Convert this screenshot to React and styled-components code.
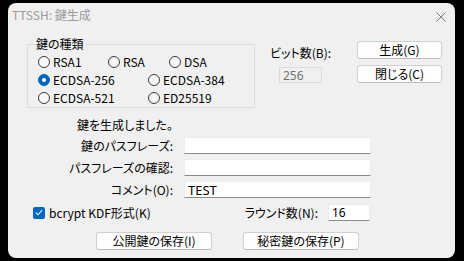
import React, { useState } from "react";
import styled, { createGlobalStyle } from "styled-components";

const GlobalStyle = createGlobalStyle`
  html, body {
    margin: 0;
    padding: 0;
    background: #000;
  }
  body {
    font-family: "Noto Sans CJK JP", "Noto Sans", sans-serif;
    font-size: 12px;
    font-feature-settings: "palt";
  }
`;

const Dialog = styled.div`
  margin: 3px 0 0 8px;
  width: 447px;
  height: 255px;
  background: #f0f0f0;
  border-radius: 8px;
  display: flex;
  flex-direction: column;
  overflow: hidden;
  color: #000;
`;

const TitleBar = styled.div`
  height: 24px;
  display: flex;
  align-items: center;
  padding-left: 4px;
  color: #9b9b9b;
  line-height: 14px;
`;

const CloseBox = styled.span`
  margin-left: auto;
  margin-right: 9px;
  display: flex;
  margin-top: 4px;
`;

const Top = styled.div`
  display: flex;
  align-items: flex-start;
  margin-top: 10px;
  padding-left: 19px;
  padding-right: 13px;
`;

const GroupBox = styled.fieldset`
  margin: 0;
  width: 228px;
  box-sizing: border-box;
  padding: 2px 0 0 7px;
  border: 1px solid #dcdcdc;
  min-width: 0;
`;

const Legend = styled.legend`
  padding: 0 1px;
  line-height: 14px;
`;

const RadioRow = styled.div`
  display: flex;
  height: 18px;
  align-items: center;
  padding-left: 3px;
`;

const RadioItem = styled.label`
  display: flex;
  align-items: center;
  width: ${(p) => p.$w}px;
  gap: 3px;
  line-height: 14px;
  white-space: nowrap;
`;

const RadioMark = styled.span`
  box-sizing: border-box;
  width: 12px;
  height: 12px;
  border-radius: 50%;
  flex: none;
  border: 1px solid ${(p) => (p.$on ? "#0067c0" : "#3c3c3c")};
  background: ${(p) => (p.$on ? "#0067c0" : "#f8f8f8")};
  display: flex;
  align-items: center;
  justify-content: center;
  &::after {
    content: "";
    width: 4px;
    height: 4px;
    border-radius: 50%;
    background: #fff;
    display: ${(p) => (p.$on ? "block" : "none")};
  }
`;

const BitCol = styled.div`
  margin-left: 15px;
  margin-top: 9px;
  display: flex;
  flex-direction: column;
`;

const Label = styled.span`
  line-height: 14px;
  white-space: nowrap;
  text-align: ${(p) => p.$align || "left"};
`;

const Field = styled.div`
  box-sizing: border-box;
  height: ${(p) => p.$h || 17}px;
  width: ${(p) => p.$w}px;
  margin-left: ${(p) => p.$ml || 0}px;
  margin-top: ${(p) => p.$mt || 0}px;
  background: ${(p) => (p.$disabled ? "#f0f0f0" : "#fff")};
  border: 1px solid ${(p) => (p.$disabled ? "#dcdcdc" : "#ececec")};
  border-bottom-color: ${(p) => (p.$disabled ? "#dcdcdc" : "#8a8a8a")};
  color: ${(p) => (p.$disabled ? "#707070" : "#000")};
  padding-left: 3px;
  font-family: "Noto Sans", sans-serif;
  font-size: ${(p) => p.$fs || 12}px;
  display: flex;
  align-items: center;
`;

const ButtonCol = styled.div`
  margin-left: auto;
  margin-top: 4px;
  display: flex;
  flex-direction: column;
  gap: 6px;
`;

const Button = styled.button`
  box-sizing: border-box;
  width: ${(p) => p.$w}px;
  height: 18px;
  padding: 0;
  background: #fdfdfd;
  border: 1px solid #d0d0d0;
  border-bottom-color: #bdbdbd;
  border-radius: 3px;
  font: inherit;
  line-height: 14px;
  color: #000;
`;

const Status = styled.div`
  margin-top: 10px;
  padding-left: 69px;
  line-height: 14px;
`;

const FieldGrid = styled.div`
  margin-top: 5px;
  display: grid;
  grid-template-columns: 165px 187px;
  column-gap: 11px;
  row-gap: 5px;
  align-items: center;
`;

const OptionRow = styled.div`
  margin-top: 6px;
  display: flex;
  align-items: center;
  padding-left: 25px;
  padding-right: 85px;
`;

const Check = styled.span`
  box-sizing: border-box;
  width: 12px;
  height: 12px;
  border-radius: 2px;
  background: #0067c0;
  display: flex;
  align-items: center;
  justify-content: center;
  margin-right: 4px;
`;

const Rounds = styled.div`
  margin-left: auto;
  display: flex;
  align-items: center;
  gap: 10px;
`;

const BottomRow = styled.div`
  margin-top: 11px;
  padding-left: 88px;
  display: flex;
  gap: 31px;
`;

const types = [
  [
    ["RSA1", 70],
    ["RSA", 61],
    ["DSA", 60],
  ],
  [
    ["ECDSA-256", 110],
    ["ECDSA-384", 80],
  ],
  [
    ["ECDSA-521", 110],
    ["ED25519", 80],
  ],
];

const App = () => {
  const [keyType, setKeyType] = useState("ECDSA-256");

  return (
    <>
      <GlobalStyle />
      <Dialog>
        <TitleBar>
          TTSSH: 鍵生成
          <CloseBox>
            <svg width="10" height="10" viewBox="0 0 10 10">
              <path d="M0.5 0.5 L9.5 9.5 M9.5 0.5 L0.5 9.5" stroke="#7a7a7a" strokeWidth="1" />
            </svg>
          </CloseBox>
        </TitleBar>
        <Top>
          <GroupBox>
            <Legend>鍵の種類</Legend>
            {types.map((row, i) => (
              <RadioRow key={i}>
                {row.map(([name, w]) => (
                  <RadioItem key={name} $w={w} onClick={() => setKeyType(name)}>
                    <RadioMark $on={keyType === name} />
                    {name}
                  </RadioItem>
                ))}
              </RadioRow>
            ))}
          </GroupBox>
          <BitCol>
            <Label>ビット数(B):</Label>
            <Field $w={43} $h={16} $ml={9} $mt={7} $disabled>
              256
            </Field>
          </BitCol>
          <ButtonCol>
            <Button $w={85}>生成(G)</Button>
            <Button $w={85}>閉じる(C)</Button>
          </ButtonCol>
        </Top>
        <Status>鍵を生成しました。</Status>
        <FieldGrid>
          <Label $align="right">鍵のパスフレーズ:</Label>
          <Field $w={187} />
          <Label $align="right">パスフレーズの確認:</Label>
          <Field $w={187} />
          <Label $align="right">コメント(O):</Label>
          <Field $w={187} $fs={13}>TEST</Field>
        </FieldGrid>
        <OptionRow>
          <Check>
            <svg width="8" height="7" viewBox="0 0 8 7">
              <path d="M0.8 3.6 L3 5.8 L7.2 1" fill="none" stroke="#fff" strokeWidth="1.1" />
            </svg>
          </Check>
          <Label>bcrypt KDF形式(K)</Label>
          <Rounds>
            <Label>ラウンド数(N):</Label>
            <Field $w={42}>16</Field>
          </Rounds>
        </OptionRow>
        <BottomRow>
          <Button $w={116}>公開鍵の保存(I)</Button>
          <Button $w={116}>秘密鍵の保存(P)</Button>
        </BottomRow>
      </Dialog>
    </>
  );
};

export default App;
